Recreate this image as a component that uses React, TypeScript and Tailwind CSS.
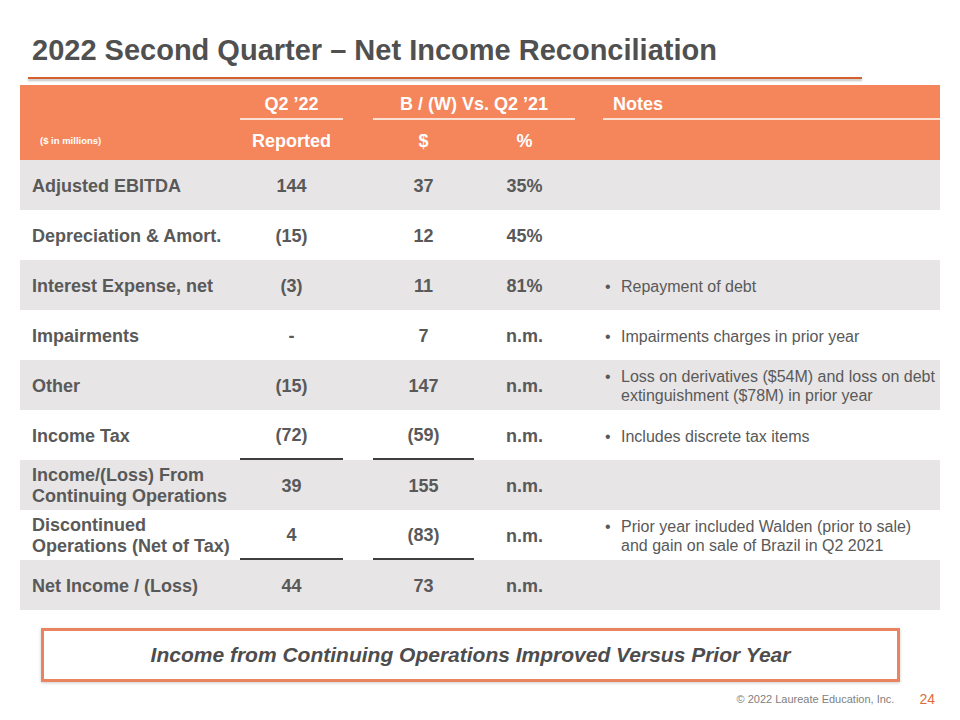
type Row = {
  label: React.ReactNode;
  reported: string;
  dollar: string;
  pct: string;
  note?: React.ReactNode;
  gray: boolean;
  ruleBelow?: boolean;
};

const rows: Row[] = [
  { label: "Adjusted EBITDA", reported: "144", dollar: "37", pct: "35%", gray: true },
  { label: "Depreciation & Amort.", reported: "(15)", dollar: "12", pct: "45%", gray: false },
  { label: "Interest Expense, net", reported: "(3)", dollar: "11", pct: "81%", note: "Repayment of debt", gray: true },
  { label: "Impairments", reported: "-", dollar: "7", pct: "n.m.", note: "Impairments charges in prior year", gray: false },
  {
    label: "Other",
    reported: "(15)",
    dollar: "147",
    pct: "n.m.",
    note: (
      <>
        Loss on derivatives ($54M) and loss on debt
        <br />
        extinguishment ($78M) in prior year
      </>
    ),
    gray: true,
  },
  { label: "Income Tax", reported: "(72)", dollar: "(59)", pct: "n.m.", note: "Includes discrete tax items", gray: false, ruleBelow: true },
  {
    label: (
      <>
        Income/(Loss) From
        <br />
        Continuing Operations
      </>
    ),
    reported: "39",
    dollar: "155",
    pct: "n.m.",
    gray: true,
  },
  {
    label: (
      <>
        Discontinued
        <br />
        Operations (Net of Tax)
      </>
    ),
    reported: "4",
    dollar: "(83)",
    pct: "n.m.",
    note: (
      <>
        Prior year included Walden (prior to sale)
        <br />
        and gain on sale of Brazil in Q2 2021
      </>
    ),
    gray: false,
    ruleBelow: true,
  },
  { label: "Net Income / (Loss)", reported: "44", dollar: "73", pct: "n.m.", gray: true },
];

function DataRow({ row }: { row: Row }) {
  const rule = row.ruleBelow ? "border-b-2 border-[#3f3f3f]" : "";
  return (
    <div className={`flex h-[50px] items-center pt-[2px] ${row.gray ? "bg-[#e7e5e6]" : "bg-white"}`}>
      <div className="w-[220px] pl-[12px] text-[18px] font-bold leading-[21px] whitespace-nowrap">{row.label}</div>
      <div className={`flex h-full w-[103px] items-center justify-center text-[18px] font-bold ${rule}`}>
        {row.reported}
      </div>
      <div className="w-[30px]" />
      <div className={`flex h-full w-[101px] items-center justify-center text-[18px] font-bold ${rule}`}>
        {row.dollar}
      </div>
      <div className="w-[101px] text-center text-[18px] font-bold">{row.pct}</div>
      <div className="w-[28px]" />
      <div className="flex w-[337px] text-[16px] leading-[19px] whitespace-nowrap">
        {row.note && (
          <>
            <span className="w-[18px] pl-[2px]">•</span>
            <span>{row.note}</span>
          </>
        )}
      </div>
    </div>
  );
}

export default function App() {
  return (
    <div className="flex h-[720px] w-[960px] flex-col bg-white font-['Liberation_Sans',Arial,sans-serif] text-[#595959]">
      {/* Title */}
      <h1 className="ml-[32px] pt-[36px] text-[29px] leading-[29px] font-bold text-[#505050] whitespace-nowrap">
        2022 Second Quarter – Net Income Reconciliation
      </h1>
      <div className="mt-[12px] ml-[28px] h-[2px] w-[834px] bg-[#d5602f] shadow-[0_2px_2px_rgba(0,0,0,0.25)]" />

      {/* Table */}
      <div className="mx-[20px] mt-[6px] w-[920px]">
        <div className="bg-[#f5855b] text-white">
          <div className="flex h-[35px] text-[18px] font-bold">
            <div className="w-[220px]" />
            <div className="flex h-full w-[103px] items-center justify-center border-b-2 border-[#fbe0d4] pt-[6px]">
              Q2 ’22
            </div>
            <div className="w-[30px]" />
            <div className="flex h-full w-[202px] items-center justify-center border-b-2 border-[#fbe0d4] pt-[6px]">
              B / (W) Vs. Q2 ’21
            </div>
            <div className="w-[28px]" />
            <div className="flex h-full w-[337px] items-center border-b-2 border-[#fbe0d4] pt-[6px] pl-[10px]">
              Notes
            </div>
          </div>
          <div className="flex h-[40px] items-center pt-[3px] font-bold">
            <div className="w-[220px] pl-[20px] text-[9.5px]">($ in millions)</div>
            <div className="w-[103px] text-center text-[18px]">Reported</div>
            <div className="w-[30px]" />
            <div className="w-[101px] text-center text-[18px]">$</div>
            <div className="w-[101px] text-center text-[18px]">%</div>
          </div>
        </div>
        {rows.map((row, i) => (
          <DataRow key={i} row={row} />
        ))}
      </div>

      {/* Callout */}
      <div className="mt-[18px] ml-[41px] flex h-[54px] w-[859px] items-center justify-center border-[3px] border-[#ea8460] shadow-[0_1px_3px_rgba(0,0,0,0.2)]">
        <span className="text-[21px] font-bold italic text-[#4d4d4d]">
          Income from Continuing Operations Improved Versus Prior Year
        </span>
      </div>

      {/* Footer */}
      <div className="mt-[7px] flex h-[20px] items-center justify-end pr-[25px]">
        <span className="text-[11px] text-[#808080]">© 2022 Laureate Education, Inc.</span>
        <span className="ml-[25px] text-[14px] text-[#e06c3b]">24</span>
      </div>
    </div>
  );
}
